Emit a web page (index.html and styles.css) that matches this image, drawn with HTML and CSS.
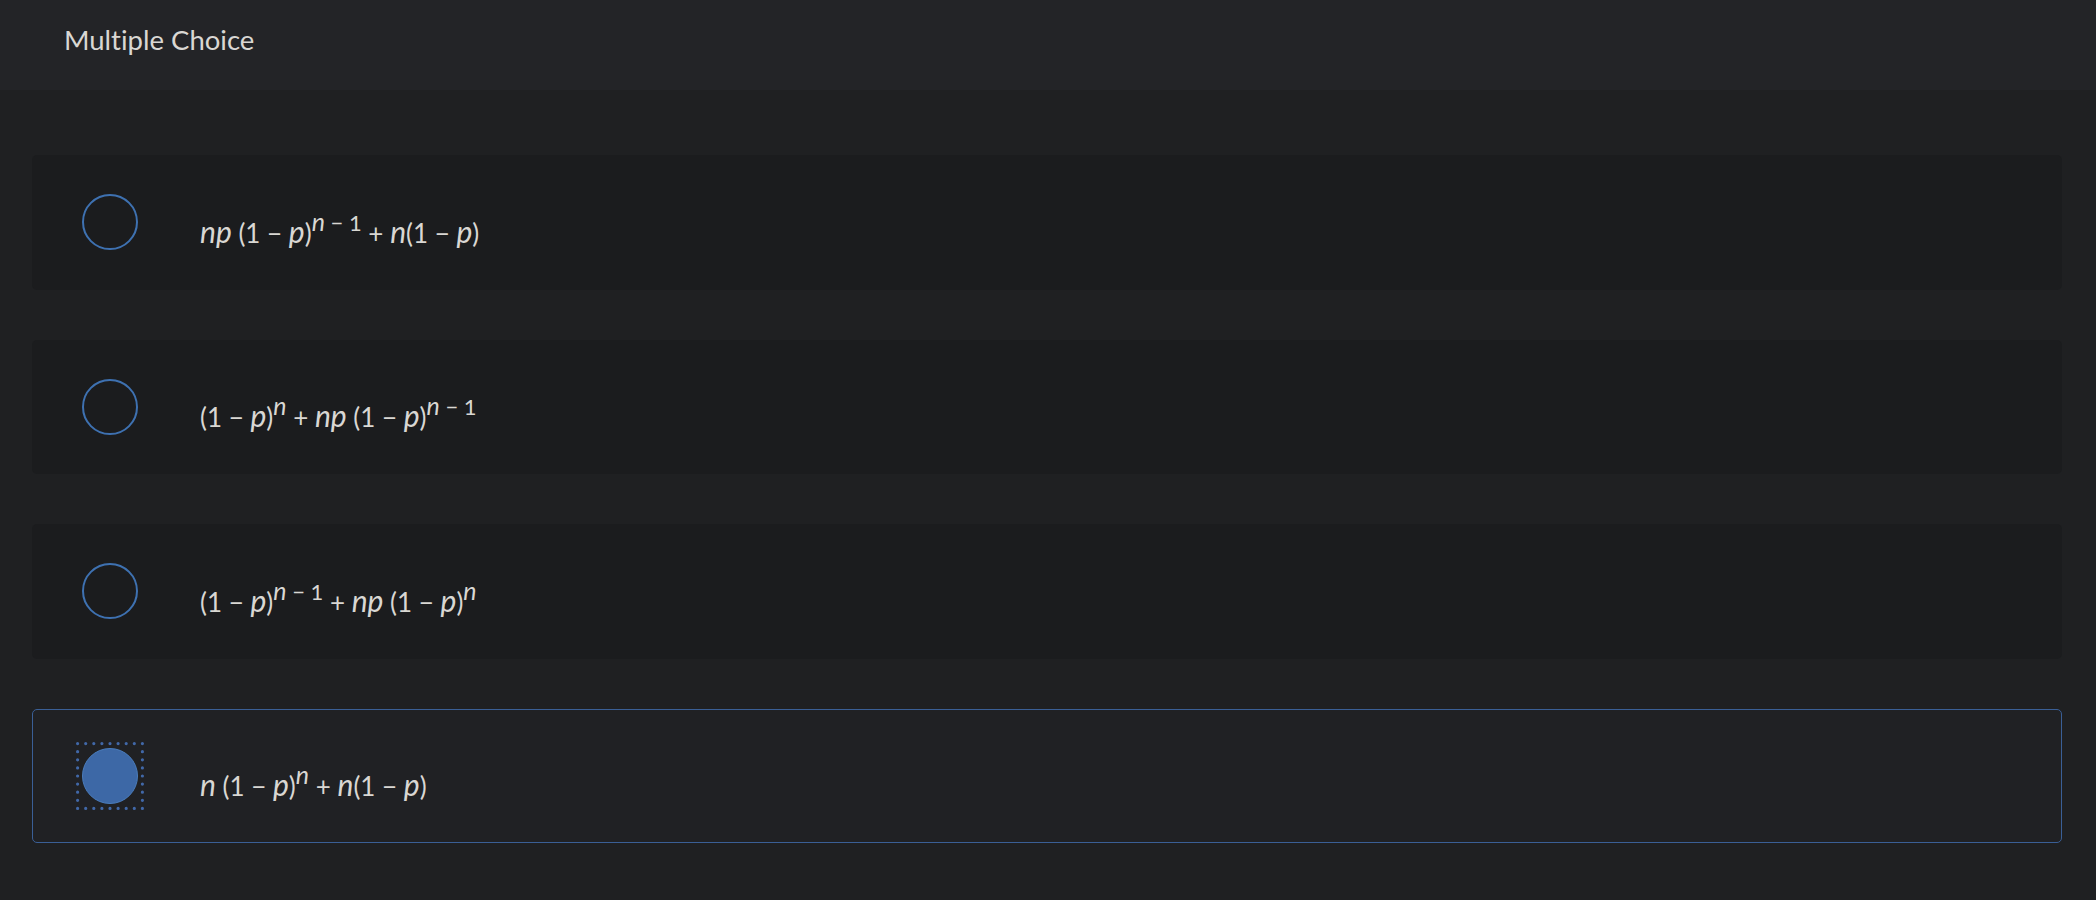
FILE: index.html
```html
<!DOCTYPE html>
<html lang="en">
<head>
    <meta charset="UTF-8">
    <meta name="viewport" content="width=device-width, initial-scale=1.0">
    <title>Multiple Choice</title>
    <link rel="stylesheet" href="styles.css">
</head>
<body>
    <div class="question-header">
        <h1>Multiple Choice</h1>
    </div>

    <div class="choices">
        <!-- Choix A -->
        <label class="choice">
            <input type="radio" name="answer" value="a">
            <span class="radio-box"><span class="radio"></span></span>
            <span class="expr"><i>np</i> (1 − <i>p</i>)<sup><i>n</i> − 1</sup> + <i>n</i>(1 − <i>p</i>)</span>
        </label>

        <!-- Choix B -->
        <label class="choice">
            <input type="radio" name="answer" value="b">
            <span class="radio-box"><span class="radio"></span></span>
            <span class="expr">(1 − <i>p</i>)<sup><i>n</i></sup> + <i>np</i> (1 − <i>p</i>)<sup><i>n</i> − 1</sup></span>
        </label>

        <!-- Choix C -->
        <label class="choice">
            <input type="radio" name="answer" value="c">
            <span class="radio-box"><span class="radio"></span></span>
            <span class="expr">(1 − <i>p</i>)<sup><i>n</i> − 1</sup> + <i>np</i> (1 − <i>p</i>)<sup><i>n</i></sup></span>
        </label>

        <!-- Choix D (sélectionné) -->
        <label class="choice selected">
            <input type="radio" name="answer" value="d" checked>
            <span class="radio-box">
                <svg class="focus-ring" width="68" height="68" viewBox="0 0 68 68">
                    <rect x="1.6" y="1.6" width="64.8" height="64.8" fill="none" stroke="#4168a8" stroke-width="3.2" stroke-linecap="round" stroke-dasharray="0 8.1"/>
                </svg>
                <span class="radio"></span>
            </span>
            <span class="expr"><i>n</i> (1 − <i>p</i>)<sup><i>n</i></sup> + <i>n</i>(1 − <i>p</i>)</span>
        </label>
    </div>
</body>
</html>
```

FILE: styles.css
```css
body {
    margin: 0;
    background-color: #1f2022;
    font-family: Lato, "Open Sans", sans-serif;
    font-variant-ligatures: none;
    color: #d9d7d3;
}
.question-header {
    height: 90px;
    box-sizing: border-box;
    padding: 24px 64px 0;
    background-color: #232427;
}
.question-header h1 {
    margin: 0;
    font-size: 27.5px;
    font-weight: normal;
    line-height: 32px;
}
.choices {
    display: flex;
    flex-direction: column;
    gap: 50px;
    padding: 65px 34px 40px 32px;
}
.choice {
    display: flex;
    align-items: center;
    height: 134.5px;
    box-sizing: border-box;
    padding-left: 43px;
    background-color: #1b1c1e;
    border: 1px solid transparent;
    border-radius: 5px;
    cursor: pointer;
}
.choice input {
    display: none;
}
.radio-box {
    position: relative;
    display: flex;
    align-items: center;
    justify-content: center;
    width: 68px;
    height: 68px;
    flex-shrink: 0;
}
.focus-ring {
    position: absolute;
    top: 0;
    left: 0;
}
.radio {
    width: 52px;
    height: 52px;
    border: 2px solid #3e71b1;
    border-radius: 50%;
}
.expr {
    margin-left: 56px;
    margin-top: 19px;
    font-size: 26px;
    line-height: 40px;
    white-space: nowrap;
}
.expr i {
    font-size: 30px;
}
.expr sup {
    font-size: 22px;
    line-height: 0;
    vertical-align: 12px;
}
.expr sup i {
    font-size: 25px;
}
.choice.selected {
    background-color: #202124;
    border-color: #3a5f96;
}
.choice.selected .radio {
    width: 54px;
    height: 54px;
    border: 1px solid #4a7dbd;
    background-color: #3d68a6;
}
```
